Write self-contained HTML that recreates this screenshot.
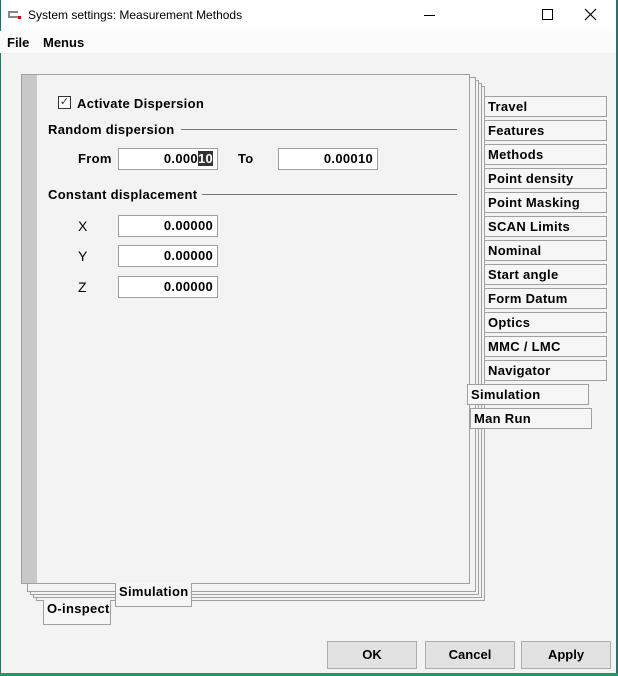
<!DOCTYPE html>
<html><head><style>
*{margin:0;padding:0;box-sizing:border-box}
body{width:618px;height:676px;background:#f3f3f3;position:relative;overflow:hidden;font-family:"Liberation Sans",sans-serif;}
.a{position:absolute}
.b{font-weight:bold;font-size:13px;color:#000;letter-spacing:0.3px}
.tab{position:absolute;background:#f6f6f6;border:1px solid #a0a0a0;font-weight:bold;font-size:13px;padding-left:3px;line-height:19px;height:21px;letter-spacing:0.3px}
.inp{position:absolute;background:#fff;border:1px solid #a0a0a0;height:22px;width:100px;text-align:right;padding-right:4px;font-weight:bold;font-size:13px;line-height:20px;letter-spacing:0.3px}
.btn{position:absolute;top:641px;height:28px;width:90px;background:#e1e1e1;border:1px solid #adadad;text-align:center;font-weight:bold;font-size:13px;line-height:26px}
.line{position:absolute;height:1px;background:#777}
</style></head><body>
<div class="a" style="left:0;top:0;width:618px;height:31px;background:#fff"></div>
<div class="a" style="left:0;top:0;width:1px;height:676px;background:#2a6f6a"></div>
<div class="a" style="right:0;top:0;width:2px;height:676px;background:#2a6f6a"></div>
<div class="a" style="left:0;top:673px;width:618px;height:3px;background:#1f9a6a"></div>
<div class="a" style="left:8px;top:11px;width:10px;height:7px;border:2px solid #888;border-right:none"></div>
<div class="a" style="left:18px;top:16px;width:3px;height:3px;background:#d00"></div>
<div class="a" style="left:28px;top:8px;font-size:12px;color:#000">System settings: Measurement Methods</div>
<div class="a" style="left:424px;top:15px;width:11px;height:1px;background:#000"></div>
<div class="a" style="left:542px;top:9px;width:11px;height:11px;border:1px solid #000"></div>
<svg class="a" style="left:584px;top:8px" width="13" height="13"><path d="M1 1L12 12M12 1L1 12" stroke="#000" stroke-width="1.2"/></svg>
<div class="a" style="left:0;top:31px;width:616px;height:22px;background:#fbfbfb"></div>
<div class="a" style="left:7px;top:35px;font-size:13px;font-weight:bold">File</div>
<div class="a" style="left:43px;top:35px;font-size:13px;font-weight:bold">Menus</div>

<div class="a" style="left:36px;top:86px;width:449px;height:515px;border:1px solid #a0a0a0"></div>
<div class="a" style="left:33px;top:83px;width:449px;height:515px;border:1px solid #a0a0a0;background:#f3f3f3"></div>
<div class="a" style="left:30px;top:80px;width:449px;height:515px;border:1px solid #a0a0a0;background:#f3f3f3"></div>
<div class="a" style="left:27px;top:77px;width:449px;height:515px;border:1px solid #a0a0a0;background:#f3f3f3"></div>
<div class="a" style="left:21px;top:74px;width:449px;height:510px;border:1px solid #a0a0a0;background:#f3f3f3"></div>
<div class="a" style="left:22px;top:75px;width:15px;height:508px;background:#c8c8c8"></div>

<div class="a" style="left:58px;top:96px;width:13px;height:13px;border:1px solid #333;background:#fff;font-size:11px;line-height:11px;text-align:center;color:#333">✓</div>
<div class="a b" style="left:77px;top:96px">Activate Dispersion</div>
<div class="a b" style="left:48px;top:122px">Random dispersion</div>
<div class="line" style="left:181px;top:129px;width:276px"></div>
<div class="a b" style="left:78px;top:151px">From</div>
<div class="inp" style="left:118px;top:148px">0.000<span style="background:#333;color:#fff">10</span></div>
<div class="a b" style="left:238px;top:151px">To</div>
<div class="inp" style="left:278px;top:148px">0.00010</div>
<div class="a b" style="left:48px;top:187px">Constant displacement</div>
<div class="line" style="left:202px;top:194px;width:255px"></div>
<div class="a" style="left:78px;top:218px;font-size:14px">X</div>
<div class="inp" style="left:118px;top:215px">0.00000</div>
<div class="a" style="left:78px;top:248px;font-size:14px">Y</div>
<div class="inp" style="left:118px;top:245px">0.00000</div>
<div class="a" style="left:78px;top:279px;font-size:14px">Z</div>
<div class="inp" style="left:118px;top:276px">0.00000</div>

<div class="tab" style="left:484px;top:96px;width:123px">Travel</div>
<div class="tab" style="left:484px;top:120px;width:123px">Features</div>
<div class="tab" style="left:484px;top:144px;width:123px">Methods</div>
<div class="tab" style="left:484px;top:168px;width:123px">Point density</div>
<div class="tab" style="left:484px;top:192px;width:123px">Point Masking</div>
<div class="tab" style="left:484px;top:216px;width:123px">SCAN Limits</div>
<div class="tab" style="left:484px;top:240px;width:123px">Nominal</div>
<div class="tab" style="left:484px;top:264px;width:123px">Start angle</div>
<div class="tab" style="left:484px;top:288px;width:123px">Form Datum</div>
<div class="tab" style="left:484px;top:312px;width:123px">Optics</div>
<div class="tab" style="left:484px;top:336px;width:123px">MMC / LMC</div>
<div class="tab" style="left:484px;top:360px;width:123px">Navigator</div>
<div class="tab" style="left:467px;top:384px;width:122px">Simulation</div>
<div class="tab" style="left:470px;top:408px;width:122px">Man Run</div>

<div class="tab" style="left:115px;top:583px;width:77px;height:24px;line-height:18px;border-top:none">Simulation</div>
<div class="tab" style="left:43px;top:600px;width:68px;height:25px;line-height:18px;border-top:none">O-inspect</div>

<div class="btn" style="left:327px">OK</div>
<div class="btn" style="left:425px">Cancel</div>
<div class="btn" style="left:521px">Apply</div>
</body></html>
